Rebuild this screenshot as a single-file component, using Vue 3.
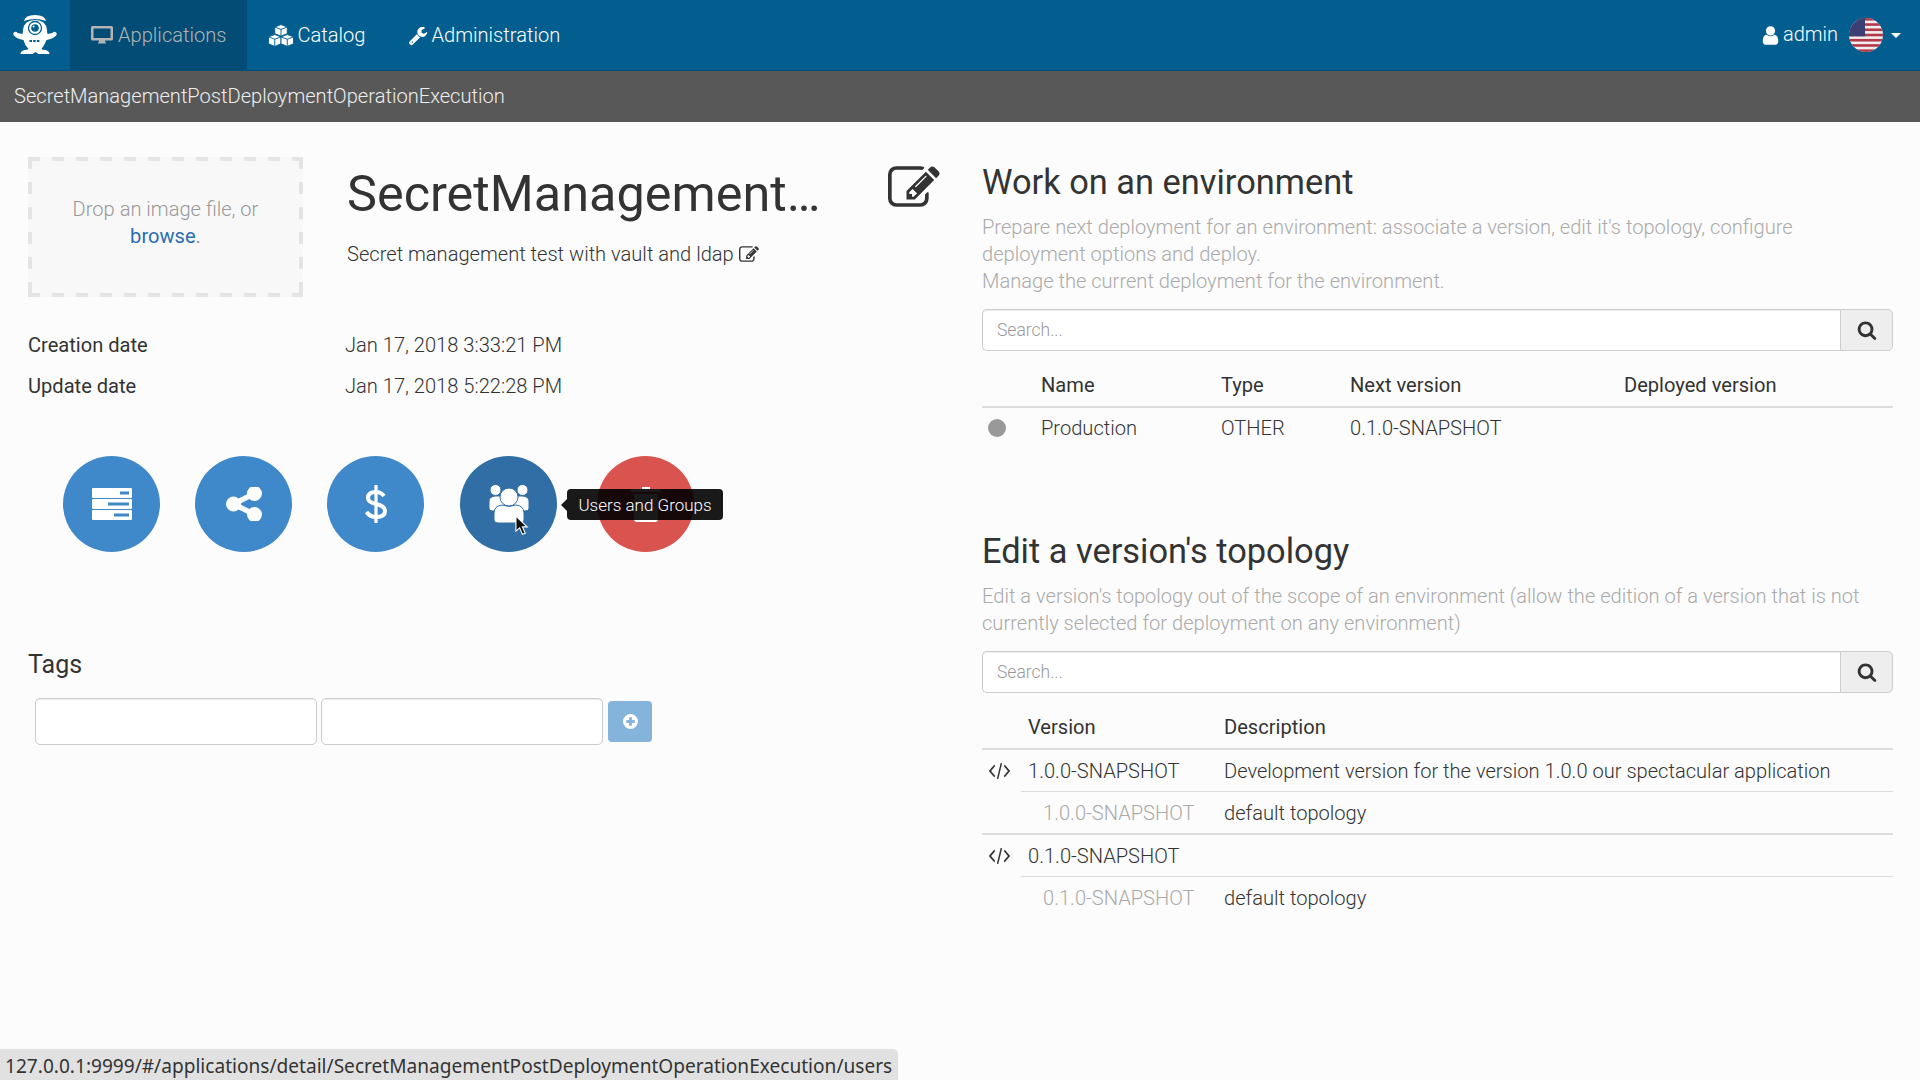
<script setup>
const environments = [{ name: "Production", type: "OTHER", next: "0.1.0-SNAPSHOT", deployed: "" }];

const versions = [
  {
    version: "1.0.0-SNAPSHOT",
    description: "Development version for the version 1.0.0 our spectacular application",
    topology: "default topology",
  },
  { version: "0.1.0-SNAPSHOT", description: "", topology: "default topology" },
];

const searchPath =
  "M1216 832q0-185-131.5-316.5t-316.5-131.5-316.5 131.5-131.5 316.5 131.5 316.5 316.5 131.5 316.5-131.5 131.5-316.5zm512 832q0 52-38 90t-90 38q-54 0-90-38l-343-342q-179 124-399 124-143 0-273.5-55.5t-225-150-150-225-55.5-273.5 55.5-273.5 150-225 225-150 273.5-55.5 273.5 55.5 225 150 150 225 55.5 273.5q0 220-124 399l343 343q37 37 37 90z";

const editPath =
  "M888 1184l116-116-152-152-116 116v56h96v96h56zm440-720q-16-16-33 1l-350 350q-17 17-1 33t33-1l350-350q17-17 1-33zm80 594v190q0 119-84.500 203.500t-203.500 84.500h-832q-119 0-203.500-84.500t-84.500-203.500v-832q0-119 84.500-203.500t203.500-84.500h832q63 0 117 25 15 7 18 23 3 17-9 29l-49 49q-14 14-32 8-23-6-45-6h-832q-66 0-113 47t-47 113v832q0 66 47 113t113 47h832q66 0 113-47t47-113v-126q0-13 9-22l64-64q15-15 35-7t20 29zm-96-738l288 288-672 672h-288v-288zm444 132l-92 92-288-288 92-92q28-28 68-28t68 28l152 152q28 28 28 68t-28 68z";
</script>

<template>
  <div class="page">
    <header class="navbar">
      <div class="brand">
        <svg width="70" height="70" viewBox="0 0 70 70">
          <path fill="#fff" d="M24 21q1-6 11-6q10 0 11 6q-11-4-22 0z" />
          <path fill="#fff" d="M35 20q11 0 12 10q0 2 .5 4l5-1q1-2 3-1q2 1 1 3q-3 4-10 5q-2 5-5 9q1 1 4 1q4 1 4 4h-11l-3-2-3 2h-12q0-3 4-4q3 0 4-1q-4-4-5-9q-7-1-10-5q-1-2 1-3q2-1 3 1l5 1q.5-2 .5-4q1-10 12-10z" />
          <circle cx="35" cy="28" r="6.500" fill="none" stroke="#025e8f" stroke-width="1.300" />
          <circle cx="35" cy="28" r="3.800" fill="#025e8f" />
          <circle cx="33.600" cy="26.600" r="1" fill="#fff" />
          <path fill="none" stroke="#025e8f" stroke-width="1.800" stroke-dasharray="2.500 1.200" d="M29.500 41h11" />
        </svg>
      </div>
      <a class="nav-item active">
        <svg class="nav-icon" width="22" height="18" viewBox="0 0 22 18">
          <path fill="currentColor" fill-rule="evenodd" d="M1.500 0h19q1.500 0 1.500 1.500v11.500q0 1.500-1.500 1.500h-6.500q0 1.500 1 2.500v.5h-8v-.5q1-1 1-2.500h-6.500q-1.500 0-1.500-1.500v-11.500q0-1.500 1.500-1.500zM2.500 2.500v9.500h17v-9.500z" />
        </svg>
        <span>Applications</span>
      </a>
      <a class="nav-item">
        <svg class="nav-icon" width="26" height="23" viewBox="0 0 25 22">
          <g fill="#fff" stroke="#025e8f" stroke-width="0.900">
            <path d="M12.500 0.500l6 2.300v6.500l-6 2.300-6-2.300v-6.500z" />
            <path d="M6.500 10l6 2.300v6.700l-6 2.500-6-2.500v-6.700z" />
            <path d="M18.500 10l6 2.300v6.700l-6 2.500-6-2.500v-6.700z" />
            <path fill="none" d="M6.500 2.800l6 2.300 6-2.300M12.500 5.100v6.700M0.500 12.300l6 2.300 6-2.300M6.500 14.600v6.900M12.500 12.300l6 2.300 6-2.300M18.500 14.600v6.900" />
          </g>
        </svg>
        <span>Catalog</span>
      </a>
      <a class="nav-item">
        <svg class="nav-icon" width="20" height="21" viewBox="0 0 1792 1792">
          <path fill="#fff" d="M448 1472q0-26-19-45t-45-19-45 19-19 45 19 45 45 19 45-19 19-45zm644-420l-682 682q-37 37-90 37-52 0-91-37l-106-107q-38-36-38-90 0-53 38-91l681-681q39 98 114.500 173.500t173.500 114.500zm634-435q0 39-23 106-47 134-164.500 217.500t-258.500 83.500q-185 0-316.500-131.500t-131.500-316.500 131.500-316.500 316.500-131.500q58 0 121.500 16.500t107.500 46.500q16 11 16 28t-16 28l-293 169v224l193 107q5-3 79-48.500t135.500-81 70.500-35.500q15 0 23.500 10t8.500 25z" />
        </svg>
        <span>Administration</span>
      </a>
      <div class="user-menu">
        <svg class="user-icon" width="17" height="19" viewBox="192 128 1408 1536">
          <path fill="#fff" d="M1536 1399q0 109-62.500 187t-150.500 78h-854q-88 0-150.500-78t-62.500-187q0-85 8.500-160.500t31.500-152 58.500-131 94-89 134.500-34.500q131 128 313 128t313-128q76 0 134.500 34.500t94 89 58.500 131 31.500 152 8.500 160.500zm-256-887q0 159-112.500 271.500t-271.500 112.500-271.500-112.500-112.500-271.500 112.500-271.500 271.500-112.500 271.500 112.500 112.500 271.500z" />
        </svg>
        <span class="user-name">admin</span>
        <svg class="flag" width="34" height="34" viewBox="0 0 34 34">
          <defs>
            <clipPath id="flag-clip"><circle cx="17" cy="17" r="17" /></clipPath>
          </defs>
          <g clip-path="url(#flag-clip)">
            <rect width="34" height="34" fill="#f1eeee" />
            <rect v-for="i in 7" :key="i" x="0" :y="(i - 1) * 5.23" width="34" height="2.620" fill="#b5384a" />
            <rect width="16" height="18.300" fill="#3c3f73" />
          </g>
        </svg>
        <span class="caret"></span>
      </div>
    </header>

    <div class="breadcrumb">SecretManagementPostDeploymentOperationExecution</div>

    <main class="content">
      <section class="left">
        <div class="summary">
          <div class="dropzone">
            <span>Drop an image file, or</span>
            <a>browse<span class="dot">.</span></a>
          </div>
          <div class="title-block">
            <h1 class="app-title">SecretManagement…</h1>
            <p class="app-desc">
              Secret management test with vault and ldap
              <svg width="20" height="16" viewBox="0 128 1800 1408"><path fill="#333" :d="editPath" /></svg>
            </p>
          </div>
          <svg class="title-edit" width="52" height="41" viewBox="0 128 1800 1408"><path fill="#333" :d="editPath" /></svg>
        </div>

        <div class="info-row"><strong>Creation date</strong><span>Jan 17, 2018 3:33:21 PM</span></div>
        <div class="info-row"><strong>Update date</strong><span>Jan 17, 2018 5:22:28 PM</span></div>

        <div class="actions">
          <button class="round">
            <svg width="40" height="32" viewBox="0 0 40 32">
              <g fill="#fff">
                <rect y="0" width="40" height="10" rx="1" />
                <rect y="11" width="40" height="10" rx="1" />
                <rect y="22" width="40" height="10" rx="1" />
              </g>
              <g fill="#3f88c9">
                <rect x="28" y="3.500" width="9" height="3" />
                <rect x="16" y="14.500" width="21" height="3" />
                <rect x="22" y="25.500" width="15" height="3" />
              </g>
            </svg>
          </button>
          <button class="round">
            <svg width="36" height="34" viewBox="128 192 1536 1408">
              <path fill="#fff" d="M1344 1024q133 0 226.500 93.500t93.500 226.500-93.500 226.500-226.500 93.500-226.500-93.500-93.500-226.500q0-12 2-34l-360-180q-92 86-218 86-133 0-226.500-93.500t-93.500-226.500 93.500-226.500 226.500-93.500q126 0 218 86l360-180q-2-22-2-34 0-133 93.500-226.500t226.500-93.500 226.500 93.500 93.500 226.500-93.500 226.500-226.500 93.500q-126 0-218-86l-360 180q2 22 2 34t-2 34l360 180q92-86 218-86z" />
            </svg>
          </button>
          <button class="round">
            <svg width="24" height="40" viewBox="0 0 24 40">
              <path fill="none" stroke="#fff" stroke-width="4" d="M20 12q-3-4-8-4q-8 0-8 6q0 4 8 6q9 2 9 7q0 6-9 6q-6 0-9.500-5" />
              <path fill="none" stroke="#fff" stroke-width="3.200" d="M12 1v38" />
            </svg>
          </button>
          <button class="round dark">
            <svg width="42" height="40" viewBox="0 0 42 40">
              <g fill="#fff" stroke="#306ea5" stroke-width="1">
                <circle cx="7.500" cy="6" r="5.500" />
                <circle cx="34.500" cy="6" r="5.500" />
                <path d="M1 25v-8q0-4 6-5h28q6 1 6 5v8q-1 2-4 2h-32q-3 0-4-2z" />
                <circle cx="21" cy="13" r="9" />
                <path d="M6 36v-7q0-7 8-8q7 3 14 0q8 1 8 8v7q0 3-4 3h-22q-4 0-4-3z" />
              </g>
            </svg>
          </button>
          <button class="round danger">
            <svg width="30" height="35" viewBox="0 0 30 35">
              <path fill="#fff" d="M11 0h8v2h11v3h-30v-3h11zM3 7h24v25q0 3-3 3h-18q-3 0-3-3z" />
            </svg>
            <span class="tooltip">Users and Groups</span>
          </button>
          <svg class="cursor" width="14" height="21" viewBox="0 0 15 22">
            <path fill="#111" stroke="#fff" stroke-width="1.200" d="M1 1v16l4-3.500 3 7 3-1.200-3-6.800h5z" />
          </svg>
        </div>

        <h3 class="tags-title">Tags</h3>
        <div class="tags-form">
          <input class="tag-input" type="text" />
          <input class="tag-input" type="text" />
          <button class="tag-add">
            <svg width="15" height="15" viewBox="0 0 16 16">
              <path fill="#fff" fill-rule="evenodd" d="M8 0a8 8 0 1 1 0 16a8 8 0 1 1 0-16zM6.500 3.500v3h-3v3h3v3h3v-3h3v-3h-3v-3z" />
            </svg>
          </button>
        </div>
      </section>

      <section class="right">
        <h2 class="block-title">Work on an environment</h2>
        <p class="block-help">
          Prepare next deployment for an environment: associate a version, edit it's topology, configure deployment options and deploy.<br />
          Manage the current deployment for the environment.
        </p>
        <div class="search">
          <input type="text" placeholder="Search..." />
          <button>
            <svg width="20" height="20" viewBox="0 0 1792 1792"><path fill="#333" :d="searchPath" /></svg>
          </button>
        </div>
        <table class="grid env-table">
          <thead>
            <tr>
              <th class="c-dot"></th>
              <th class="c-name">Name</th>
              <th class="c-type">Type</th>
              <th class="c-next">Next version</th>
              <th>Deployed version</th>
            </tr>
          </thead>
          <tbody>
            <tr v-for="env in environments" :key="env.name">
              <td><span class="status-dot"></span></td>
              <td>{{ env.name }}</td>
              <td>{{ env.type }}</td>
              <td>{{ env.next }}</td>
              <td>{{ env.deployed }}</td>
            </tr>
          </tbody>
        </table>

        <h2 class="block-title second">Edit a version's topology</h2>
        <p class="block-help">
          Edit a version's topology out of the scope of an environment (allow the edition of a version that is not currently selected for deployment on any environment)
        </p>
        <div class="search">
          <input type="text" placeholder="Search..." />
          <button>
            <svg width="20" height="20" viewBox="0 0 1792 1792"><path fill="#333" :d="searchPath" /></svg>
          </button>
        </div>
        <table class="grid version-table">
          <thead>
            <tr>
              <th class="c-code"></th>
              <th class="c-version">Version</th>
              <th>Description</th>
            </tr>
          </thead>
          <tbody v-for="(v, i) in versions" :key="v.version">
            <tr :class="{ separated: i > 0 }">
              <td class="code-cell">
                <svg width="21" height="18" viewBox="0 0 22 16" preserveAspectRatio="none">
                  <path fill="none" stroke="#333" stroke-width="1.600" d="M6 3l-5 5 5 5M16 3l5 5-5 5M13 1l-4 14" />
                </svg>
              </td>
              <td class="version-cell">{{ v.version }}</td>
              <td>{{ v.description }}</td>
            </tr>
            <tr class="sub">
              <td class="blank"></td>
              <td class="topology-version">{{ v.version }}</td>
              <td>{{ v.topology }}</td>
            </tr>
          </tbody>
        </table>
      </section>
    </main>

    <div class="status-bar">127.0.0.1:9999/#/applications/detail/SecretManagementPostDeploymentOperationExecution/users</div>
  </div>
</template>

<style>
html,
body {
  margin: 0;
  background: #fcfcfc;
}
</style>

<style scoped>
.page {
  position: relative;
  height: 1080px;
  overflow: hidden;
  font-family: Roboto, "Liberation Sans", sans-serif;
  font-weight: 300;
  font-size: 20.1px;
  color: #333;
  background: #fcfcfc;
}

.navbar {
  display: flex;
  align-items: stretch;
  height: 70px;
  background: #025e8f;
  border-bottom: 1px solid #024e78;
  color: #fff;
}

.brand {
  width: 70px;
}

.nav-item {
  display: flex;
  align-items: center;
  gap: 4px;
  padding: 0 21px;
  font-size: 20.1px;
  color: #fff;
}

.nav-item.active {
  gap: 5px;
  padding-right: 20px;
  background: #024c75;
  color: #b4b4b4;
}

.user-menu {
  display: flex;
  align-items: center;
  margin-left: auto;
  padding-right: 19px;
  font-size: 20px;
}

.user-name {
  margin-left: 4px;
  padding-bottom: 3px;
}

.flag {
  margin-left: 11px;
}

.caret {
  width: 0;
  height: 0;
  margin-left: 8px;
  border-left: 5px solid transparent;
  border-right: 5px solid transparent;
  border-top: 5px solid #fff;
}

.breadcrumb {
  height: 51px;
  padding-left: 14px;
  line-height: 51px;
  background: #585858;
  color: #eee;
}

.content {
  display: flex;
}

.left {
  box-sizing: border-box;
  width: 982px;
  padding: 35px 42px 0 28px;
}

.summary {
  display: flex;
  align-items: flex-start;
}

.dropzone {
  display: flex;
  flex-direction: column;
  align-items: center;
  justify-content: center;
  box-sizing: border-box;
  flex: none;
  width: 275px;
  height: 140px;
  padding-bottom: 8px;
  background-color: #f8f8f8;
  background-image: linear-gradient(to right, #e4e4e4 50%, transparent 50%),
    linear-gradient(to right, #e4e4e4 50%, transparent 50%),
    linear-gradient(to bottom, #e4e4e4 50%, transparent 50%),
    linear-gradient(to bottom, #e4e4e4 50%, transparent 50%);
  background-size: 24px 4px, 24px 4px, 4px 25px, 4px 25px;
  background-position: 0 0, 0 100%, 0 0, 100% 0;
  background-repeat: repeat-x, repeat-x, repeat-y, repeat-y;
  color: #999;
  line-height: 27px;
}

.dropzone a {
  color: #2a6db0;
  font-weight: 400;
}

.dropzone .dot {
  color: #999;
}

.title-block {
  flex: 1;
  min-width: 0;
  margin-left: 44px;
}

.app-title {
  margin: 6px 0 0;
  font-size: 50.4px;
  line-height: 62px;
  font-weight: 400;
  white-space: nowrap;
}

.app-desc {
  display: flex;
  align-items: center;
  gap: 5px;
  margin: 15px 0 0;
  line-height: 28px;
}

.title-edit {
  flex: none;
  margin-top: 9px;
}

.info-row {
  display: flex;
  height: 41px;
  line-height: 41px;
}

.summary + .info-row {
  margin-top: 28px;
}

.info-row strong {
  width: 317px;
  font-weight: 400;
}

.actions {
  position: relative;
  display: flex;
  gap: 35px;
  margin: 49px 0 0 35px;
}

.round {
  position: relative;
  display: flex;
  align-items: center;
  justify-content: center;
  flex: none;
  width: 97px;
  height: 96px;
  padding: 0;
  border: none;
  border-radius: 50%;
  background: #3f88c9;
}

.round.dark {
  margin-left: 1px;
  background: #306ea5;
}

.round.danger {
  margin-left: 5px;
  background: #d9534f;
}

.tooltip {
  position: absolute;
  left: -30px;
  top: 33px;
  width: 156px;
  height: 31px;
  border-radius: 4px;
  background: rgba(0, 0, 0, 0.9);
  color: #fff;
  font-family: Roboto, "Liberation Sans", sans-serif;
  font-size: 17px;
  font-weight: 300;
  line-height: 33px;
  text-align: center;
}

.tooltip::before {
  content: "";
  position: absolute;
  left: -6px;
  top: 10px;
  border-top: 6px solid transparent;
  border-bottom: 6px solid transparent;
  border-right: 6px solid rgba(0, 0, 0, 0.9);
}

.cursor {
  position: absolute;
  left: 452px;
  top: 59px;
}

.tags-title {
  margin: 95px 0 0;
  font-size: 25px;
  font-weight: 400;
  line-height: 36px;
}

.tags-form {
  display: flex;
  align-items: center;
  gap: 4px;
  margin: 15px 0 0 7px;
}

.tag-input {
  box-sizing: border-box;
  width: 282px;
  height: 47px;
  border: 1px solid #ccc;
  border-radius: 5px;
  background: #fff;
  box-shadow: inset 0 1px 1px rgba(0, 0, 0, 0.075);
}

.tag-add {
  display: flex;
  align-items: center;
  justify-content: center;
  width: 44px;
  height: 41px;
  margin-left: 1px;
  padding: 0;
  border: none;
  border-radius: 4px;
  background: #84b3dc;
}

.right {
  width: 911px;
  padding-top: 38px;
}

.block-title {
  margin: 0;
  font-size: 34.400px;
  font-weight: 400;
  line-height: 44px;
}

.block-title.second {
  margin-top: 81px;
}

.block-help {
  margin: 10px 0 0;
  color: #aaa;
  line-height: 27px;
}

.search {
  display: flex;
  height: 42px;
  margin-top: 14px;
}

.search input {
  box-sizing: border-box;
  flex: 1;
  min-width: 0;
  padding: 0 14px;
  border: 1px solid #ccc;
  border-right: none;
  border-radius: 5px 0 0 5px;
  background: #fff;
  box-shadow: inset 0 1px 1px rgba(0, 0, 0, 0.075);
  font-family: inherit;
  font-weight: 300;
  font-size: 17.500px;
  outline: none;
}

.search input::placeholder {
  color: #999;
}

.search button {
  display: flex;
  align-items: center;
  justify-content: center;
  box-sizing: border-box;
  width: 53px;
  padding: 0;
  border: 1px solid #ccc;
  border-radius: 0 5px 5px 0;
  background: #eee;
}

.grid {
  width: 100%;
  margin-top: 12px;
  border-collapse: separate;
  border-spacing: 0;
  table-layout: fixed;
}

.grid th {
  height: 45px;
  padding: 0;
  box-sizing: border-box;
  border-bottom: 2px solid #ddd;
  font-weight: 400;
  text-align: left;
}

.grid td {
  height: 40px;
  padding: 0;
}

.version-table td {
  height: 41px;
}

.c-dot {
  width: 59px;
}

.c-name {
  width: 180px;
}

.c-type {
  width: 129px;
}

.c-next {
  width: 274px;
}

.status-dot {
  display: block;
  width: 18px;
  height: 18px;
  margin-left: 6px;
  border-radius: 50%;
  background: #999;
}

.c-code {
  width: 39px;
}

.c-version {
  width: 203px;
  padding-left: 7px !important;
  box-sizing: border-box;
}

.code-cell {
  padding-left: 7px !important;
}

.code-cell svg {
  display: block;
}

.version-cell {
  padding-left: 7px !important;
}

.separated td {
  border-top: 2px solid #ddd;
}

.sub td {
  border-top: 1px solid #ddd;
}

.sub td.blank {
  border-top: none;
}

.topology-version {
  padding-left: 22px !important;
  color: #aaa;
}

.status-bar {
  position: absolute;
  left: 0;
  bottom: 0;
  box-sizing: border-box;
  width: 898px;
  height: 31px;
  padding-left: 5px;
  border-top-right-radius: 5px;
  background: #e1e1e1;
  color: #333;
  font-family: "Noto Sans", sans-serif;
  font-weight: 400;
  font-size: 19.100px;
  line-height: 34px;
  white-space: nowrap;
}
</style>
